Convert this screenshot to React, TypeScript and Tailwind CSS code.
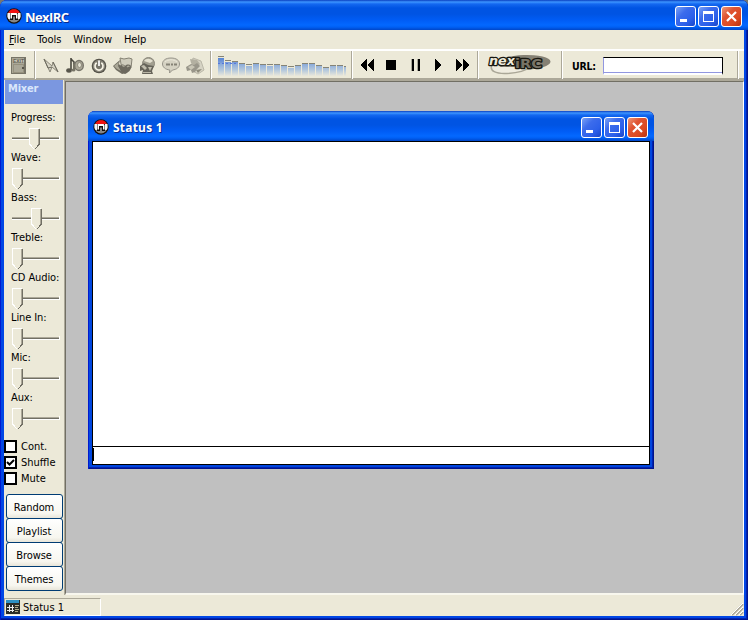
import React from "react";

const ui = "font-['DejaVu_Sans_Condensed','DejaVu_Sans',sans-serif] text-[11px] leading-[14px] text-black whitespace-nowrap";
const titleFont = "font-['Open_Sans','Noto_Sans',sans-serif] font-bold text-white whitespace-nowrap [text-shadow:1px_1px_0_#0a2a8c]";
const titleBg =
  "bg-[linear-gradient(180deg,#0a3fc0_0px,#3d95ff_2px,#1468f0_4px,#0054e3_8px,#0054e3_14px,#005cf5_20px,#0368ff_25px,#0060f5_27px,#0046c8_30px)]";

function AppIcon() {
  return (
    <svg width="16" height="16" viewBox="0 0 16 16" className="shrink-0">
      <circle cx="8" cy="8" r="7.7" fill="#15100e" />
      <circle cx="8" cy="8" r="6.5" fill="#858585" />
      <path d="M2.2 5 4 2.4 6 1.2h4l2 1.2L13.8 5Z" fill="#f01010" />
      <path d="M1.5 5h3v6h-2l-1-2ZM14.5 5h-3v6h2l1-2Z" fill="#f4f4f4" />
      <path d="M4 12V5h8v7H9V8.500H7V12Z" fill="#15100e" />
      <path d="M4.500 10.500V5h6l1 1v4.500H10V7H6v3.500Z" fill="#fff" />
    </svg>
  );
}

function WinButton({ kind }: { kind: "min" | "max" | "close" }) {
  const close = kind === "close";
  return (
    <div
      className={`flex h-[21px] w-[21px] items-center justify-center rounded-[3px] border border-white ${
        close
          ? "bg-[linear-gradient(135deg,#ee9878_0%,#df5432_35%,#dc4a22_70%,#b93210_100%)]"
          : "bg-[linear-gradient(135deg,#7aa2f6_0%,#3c6cec_35%,#2c60ea_70%,#1846c8_100%)]"
      }`}
    >
      <svg width="19" height="19" viewBox="0 0 19 19">
        {kind === "min" && <path d="M4 12h7v3H4Z" fill="#fff" />}
        {kind === "max" && <path d="M4 4h11v11H4ZM5 7v7h9V7Z" fillRule="evenodd" fill="#fff" />}
        {close && <path d="m5 5 9 9M14 5l-9 9" stroke="#fff" strokeWidth="2.2" />}
      </svg>
    </div>
  );
}

function WinButtons() {
  return (
    <div className="ml-auto flex gap-[2px]">
      <WinButton kind="min" />
      <WinButton kind="max" />
      <WinButton kind="close" />
    </div>
  );
}

function Separator() {
  return <div className="h-[28px] w-[2px] shrink-0 border-l border-[#aca899] bg-white" />;
}

function ToolIcon({ children }: { children: React.ReactNode }) {
  return (
    <svg width="24" height="24" viewBox="0 0 24 24" className="shrink-0">
      {children}
    </svg>
  );
}

function ToolIcons() {
  return (
    <div className="flex w-[175px] pl-[3px] pt-[2px]">
      <ToolIcon>
        <path d="m5 5 8 7 1-4 5 10-6-5-2 5Z" fill="#d8d5c6" stroke="#8b887a" strokeWidth="1" />
        <path d="m5 5 4 9 4-1M14 8l5 10" fill="none" stroke="#6c6a5e" strokeWidth="1" />
      </ToolIcon>
      <ToolIcon>
        <path d="M8 4v12M8 5l3 3v3" fill="none" stroke="#49473f" strokeWidth="1.6" />
        <ellipse cx="6" cy="16.500" rx="2.800" ry="2.200" fill="#57554b" />
        <ellipse cx="16" cy="11.500" rx="4.300" ry="5" fill="#aaa797" stroke="#77746a" strokeWidth="1.400" />
        <ellipse cx="16.500" cy="11" rx="2" ry="2.500" fill="#e3e0d1" stroke="#8e8b7d" />
        <path d="M11 10v6" stroke="#777466" strokeWidth="2" />
        <ellipse cx="10.500" cy="16" rx="2" ry="1.500" fill="#777466" />
      </ToolIcon>
      <ToolIcon>
        <circle cx="12" cy="12" r="7.300" fill="#56544b" />
        <circle cx="12" cy="12" r="5.600" fill="#77756a" stroke="#9d9a8c" strokeWidth=".7" />
        <path d="M9.700 8.800a4 4 0 1 0 4.600 0" fill="none" stroke="#f7f4e6" strokeWidth="1.700" />
        <path d="M12 6.500v5.500" stroke="#fff" strokeWidth="1.700" />
      </ToolIcon>
      <ToolIcon>
        <path d="m9 4 4 1 5-1 3 1-1 9-9 2Z" fill="#cfccbc" stroke="#858274" />
        <path d="m2 12 7-6-1 4 8 9-5 1-6-4Z" fill="#706d61" />
        <path d="m3 12 5-4-1 4 3 5-4-2Z" fill="#aaa797" />
        <path d="M14 20c-4-3-6-5-5-8 1-2 4-2 5 0 2-2 6-2 6 1s-2 5-6 7Z" fill="#6c695e" />
        <path d="M11 12c1-1 2 0 2 1M16 13c1-1 2-1 2 0" fill="none" stroke="#aaa797" strokeWidth="1.300" />
      </ToolIcon>
      <ToolIcon>
        <circle cx="13.500" cy="9.500" r="6" fill="#a29f90" stroke="#8b887b" />
        <path d="M9 7c2-3 6-3 9 0l-3 2-3-1Z" fill="#e4e1d1" />
        <path d="m5 12 4-3 4 2 6 1-2 5 1 3H7l1-4-3 1Z" fill="#66645a" />
        <path d="m6 12 3-1 3 3-2 2ZM13 13l4 0-2 4Z" fill="#c0bdad" />
        <path d="M8 18h8v1H8Z" fill="#b9b6a6" />
      </ToolIcon>
      <ToolIcon>
        <path d="M12 4c5.500 0 8.500 2.500 8.500 6s-3 5.500-7 6l-3 3 .300-3c-4.500-.500-7.300-3-7.300-6 0-3.500 3-6 8.500-6Z" fill="#d5d2c3" stroke="#97948a" />
        <path d="M6 8c3-3 9-3 12 0" stroke="#ebe8da" fill="none" />
        <path d="M7 10.500h4m1 0h2m1 0h3" stroke="#858276" strokeWidth="2" fill="none" />
      </ToolIcon>
      <ToolIcon>
        <path d="m10 4 8 3 3 9-6 4-7-4Z" fill="#d6d3c4" stroke="#bab7a8" />
        <path d="m7 5 7 1 3 4-4 4-5-5Z" fill="#b3b0a1" />
        <path d="m3 13 5-3 3 1 3-2 3 3-3 3-2 3-3 1-1-3-4 1Z" fill="#99968a" />
        <path d="m5 13 4-2 3 2-4 3Z" fill="#c9c6b6" />
        <path d="m13 16 6-1-4 4Z" fill="#8d8a7a" />
      </ToolIcon>
    </div>
  );
}

const caps = [56, 60, 61, 63, 64, 63, 64, 64, 64, 65, 66, 65, 63, 63, 65, 67, 65, 65, 66];

function Spectrum() {
  return (
    <svg width="128" height="20" viewBox="0 56 128 20" shapeRendering="crispEdges" className="ml-[6px]">
      <defs>
        <linearGradient id="bar" gradientUnits="userSpaceOnUse" x1="0" y1="57" x2="0" y2="76">
          <stop offset="0" stopColor="#4f80d2" />
          <stop offset=".28" stopColor="#789bda" />
          <stop offset=".4" stopColor="#8faedb" />
          <stop offset=".7" stopColor="#b6c9dc" />
          <stop offset="1" stopColor="#eae8db" />
        </linearGradient>
      </defs>
      {caps.map((y, i) => {
        const w = i === 18 ? 2 : 6;
        const gap = [0, 1, 4, 7, 10].includes(i) ? 2 : 1;
        return (
          <g key={i}>
            <rect x={i * 7} y={y + gap} width={w} height={76 - y - gap} fill="url(#bar)" />
            <rect x={i * 7} y={y} width={w} height="1" fill="#858477" />
          </g>
        );
      })}
      <path d="M0 63.500h20" stroke="#5577dc" strokeDasharray="2 2" />
    </svg>
  );
}

function MediaControls() {
  return (
    <svg width="124" height="28" viewBox="0 0 124 28" shapeRendering="crispEdges">
      <path d="M7 14 14 8v12ZM14 14l7-6v12ZM33 9h10v10H33ZM58 8h3v12h-3ZM64 8h3v12h-3ZM82 8l7 6-7 6ZM103 8l7 6-7 6ZM110 8l7 6-7 6Z" fill="#000" />
      <path d="M58.500 8v12M64.500 8v12" stroke="#aaa799" />
    </svg>
  );
}

function Logo() {
  return (
    <svg width="82" height="28" viewBox="0 0 82 28">
      <ellipse cx="45" cy="11.500" rx="26.500" ry="7.500" transform="rotate(-2 45 11.500)" fill="#858174" />
      <path d="M13 14c-2 6 4 9 15 8.500 10-.500 19-3 23-6.500H16Z" fill="#efecdf" />
      <path d="M13 14c-3 6 4 9 15 8.500 10-.500 19-3 23-6.500" fill="none" stroke="#aaa797" strokeWidth="1.500" />
      <g className="font-['DejaVu_Sans',sans-serif] font-bold" stroke="#171710" paintOrder="stroke" strokeLinejoin="round">
        <text x="10" y="13.500" fontSize="12" textLength="26" lengthAdjust="spacingAndGlyphs" fill="#eeeadb" strokeWidth="2.400" className="italic">nex</text>
        <text x="36" y="17" fontSize="12.500" textLength="27" lengthAdjust="spacingAndGlyphs" fill="#777366" strokeWidth="2.400">iRC</text>
      </g>
    </svg>
  );
}

function Slider({ label, pos }: { label: string; pos: number }) {
  return (
    <div className="h-[40px] pl-[7px]">
      <div className={`${ui} h-[14px] tracking-[-0.1px]`}>{label}</div>
      <svg width="50" height="26" viewBox="0 0 50 26" shapeRendering="crispEdges" className="block">
        <path d="M1 11h48v4H1Z" fill="#fff" />
        <path d="M1 11h47v1H1Z" fill="#ece9d8" />
        <path d="M1 12h47v1H1Z" fill="#aca899" />
        <path d="M1 13h47v1H1Z" fill="#716f64" />
        <g transform={`translate(${pos} 3)`}>
          <path d="M0 0h11v16l-5 6h-1l-5-6Z" fill="#ece9d8" />
          <path d="M.5 16V.5H10M.5 16l5 5.5" fill="none" stroke="#fff" />
          <path d="M10.5 1v15l-5 5.5" fill="none" stroke="#716f64" />
          <path d="M9.5 1v15" stroke="#aca899" />
        </g>
      </svg>
    </div>
  );
}

function Check({ label, checked }: { label: string; checked?: boolean }) {
  return (
    <div className="flex h-[16px] items-center">
      <div className="flex h-[13px] w-[13px] items-center justify-center border-2 border-black bg-white">
        {checked && (
          <svg width="9" height="9" viewBox="0 0 9 9">
            <path d="m1 4 2.500 2.500L8 2" fill="none" stroke="#000" strokeWidth="2" />
          </svg>
        )}
      </div>
      <span className={`${ui} ml-[4px] pt-[2px]`}>{label}</span>
    </div>
  );
}

const sliders: [string, number][] = [
  ["Progress:", 18], ["Wave:", 1], ["Bass:", 20], ["Treble:", 1],
  ["CD Audio:", 1], ["Line In:", 1], ["Mic:", 1], ["Aux:", 1],
];

function Sidebar() {
  return (
    <div className="w-[60px] shrink-0 overflow-hidden">
      <div className="ml-[1px] h-[24px] w-[58px] bg-[#7b97e0] pl-[3px] pt-[2px]">
        <div className="font-['DejaVu_Sans_Condensed','DejaVu_Sans',sans-serif] text-[11px] font-bold leading-[14px] tracking-[-0.2px] text-[#d9e6fa]">Mixer</div>
      </div>
      <div className="pt-[7px]">
        {sliders.map(([l, p]) => <Slider key={l} label={l} pos={p} />)}
      </div>
      <div className="mt-[7px]">
        <Check label="Cont." />
        <Check label="Shuffle" checked />
        <Check label="Mute" />
      </div>
      <div className="mt-[8px] flex flex-col pl-[2px]">
        {["Random", "Playlist", "Browse", "Themes"].map((b) => (
          <div key={b} className={`${ui} -mb-px flex h-[25px] w-[57px] items-center justify-center rounded-[3px] border border-[#003c74] bg-[linear-gradient(180deg,#fff,#f7f6ef_80%,#e8e5d9)] pr-[1px] pt-[2px] tracking-[-0.1px]`}>
            {b}
          </div>
        ))}
      </div>
    </div>
  );
}

function StatusWindow() {
  return (
    <div className="absolute left-[22px] top-[29px] flex h-[358px] w-[566px] flex-col overflow-hidden rounded-t-[7px] bg-[#0046df] shadow-[inset_1px_0_#0019cf,inset_-1px_-1px_#00138c,inset_-2px_-2px_#0022b0]">
      <div className={`flex h-[30px] shrink-0 items-center pl-[5px] pr-[6px] pt-[2px] ${titleBg}`}>
        <AppIcon />
        <span className={`${titleFont} ml-[4px] pt-[2px] text-[12px] leading-[16px] tracking-[0.2px]`}>Status 1</span>
        <WinButtons />
      </div>
      <div className="mx-[4px] mb-[4px] flex flex-1 flex-col border border-black bg-white">
        <div className="flex-1" />
        <div className="h-[18px] border-t border-black pt-[1px]">
          <div className="h-[13px] w-px bg-black" />
        </div>
      </div>
    </div>
  );
}

export default function App() {
  return (
    <div className="h-[620px] w-[748px] overflow-hidden bg-[#77776f]">
      <div className="flex h-[620px] w-[748px] flex-col overflow-hidden rounded-t-[7px] bg-[#0046e5] shadow-[inset_1px_0_#0019cf,inset_-1px_-1px_#00138c,inset_-2px_-2px_#0022b0]">
        <div className={`flex h-[30px] shrink-0 items-center pl-[6px] pr-[6px] pt-[3px] ${titleBg}`}>
          <div className="-mt-[2px]"><AppIcon /></div>
          <span className={`${titleFont} ml-[3px] text-[13px] leading-[16px] tracking-[-0.6px]`}>NexIRC</span>
          <WinButtons />
        </div>
        <div className="mx-[4px] mb-[4px] flex flex-1 flex-col bg-[#ece9d8]">
          <div className={`${ui} flex h-[19px] shrink-0 items-center gap-[12px] pl-[5px] tracking-[-0.05px]`}>
            <span><span className="underline">F</span>ile</span>
            <span>Tools</span>
            <span>Window</span>
            <span>Help</span>
          </div>
          <div className="flex h-[31px] shrink-0 items-center border-b-2 border-t-2 border-b-[#aca899] border-t-white">
            <div className="flex w-[30px] pl-[7px] pt-[2px]">
              <svg width="16" height="20" viewBox="0 0 16 20" shapeRendering="crispEdges">
                <path d="M0 1h15v17H0Z" fill="#777467" />
                <path d="M1 2h12v15H1Z" fill="#aaa797" />
                <path d="M2 3h11v3H2Z" fill="#c9c6b7" />
                <text x="2" y="7" fontSize="5" textLength="11" className="font-['Liberation_Sans',sans-serif] font-bold" fill="#615f54">EXIT</text>
                <path d="M2 8h11v9H2Z" fill="#96917e" />
                <path d="M3 9h9v7H3Z" fill="#aaa797" />
                <path d="M11 11h2v2h-2Z" fill="#575449" />
              </svg>
            </div>
            <Separator />
            <ToolIcons />
            <div className="-ml-px"><Separator /></div>
            <div className="w-[139px] pt-[2px]"><Spectrum /></div>
            <Separator />
            <MediaControls />
            <Separator />
            <Logo />
            <Separator />
            <span className="ml-[9px] w-[31px] pt-[3px] font-['DejaVu_Sans_Condensed','DejaVu_Sans',sans-serif] text-[10.500px] font-bold leading-[14px] tracking-[-0.2px]">URL:</span>
            <div className="mt-[2px] h-[18px] w-[120px] border border-b-2 border-b-white border-l-[#9297e0] border-r-black border-t-black bg-white shadow-[inset_0_-1px_#9297e0]" />
            <div className="ml-[14px]"><Separator /></div>
          </div>
          <div className="flex h-[515px] shrink-0">
            <Sidebar />
            <div className="flex flex-1 border-l border-t border-[#aca899]">
              <div className="relative min-w-0 flex-1 border-b-2 border-l border-r border-t border-b-[#f8f7ee] border-l-[#716f64] border-r-white border-t-[#716f64] bg-[#c0c0c0]">
                <StatusWindow />
              </div>
            </div>
          </div>
          <div className="flex min-h-0 flex-1 items-end">
            <div className="flex h-[18px] w-[97px] items-center border border-b-white border-l-[#aca899] border-r-white border-t-[#aca899] pl-[1px]">
              <svg width="14" height="14" viewBox="0 0 14 14" shapeRendering="crispEdges">
                <path d="M0 0h14v14H0Z" fill="#2b2d29" />
                <path d="M0 0h13v3H0Z" fill="#2e91c4" />
                <path d="M3.500 5v7M6.500 5v7M1 7.500h7M1 10.500h7" stroke="#eee" />
                <path d="M9 5.500h4M9 7.500h3M9 9.500h4M9 11.500h3" stroke="#b5ae8b" />
              </svg>
              <span className={`${ui} ml-[3px] pt-[1px]`}>Status 1</span>
            </div>
            <svg width="13" height="13" viewBox="0 0 13 13" className="ml-auto">
              <path d="M1 12 12 1M5 12l7-7M9 12l3-3" stroke="#aca899" strokeWidth="2" />
              <path d="M0 12 12 0M4 12l8-8M8 12l4-4" stroke="#fff" />
            </svg>
          </div>
        </div>
      </div>
    </div>
  );
}
